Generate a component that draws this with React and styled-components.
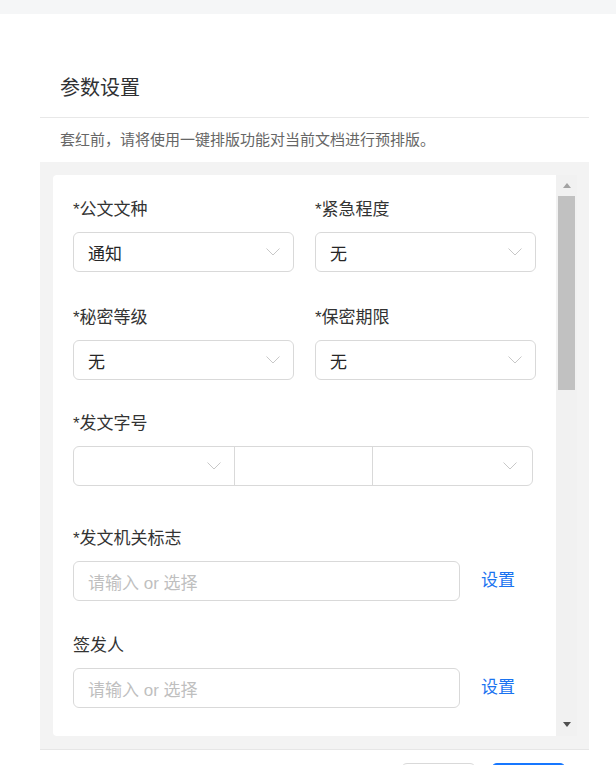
import React from 'react';
import styled, { createGlobalStyle } from 'styled-components';

const GlobalStyle = createGlobalStyle`
  html, body {
    margin: 0;
    padding: 0;
    background: #ffffff;
    font-family: "Liberation Sans", "Noto Sans CJK SC", sans-serif;
    color: #333333;
  }
  * {
    box-sizing: border-box;
  }
`;

const TopBar = styled.div`
  height: 14px;
  background-color: #f5f6f7;
`;

const Modal = styled.div`
  padding: 0 27px 0 40px;
`;

const Header = styled.div`
  padding: 60px 20px 15px;
  border-bottom: 1px solid #e8e8e8;
`;

const Title = styled.h2`
  margin: 0;
  font-size: 20px;
  line-height: 28px;
  font-weight: 400;
  color: #303133;
`;

const Notice = styled.p`
  margin: 11px 0 11px;
  padding-left: 20px;
  font-size: 15px;
  line-height: 22px;
  color: #666666;
`;

const Panel = styled.div`
  background-color: #f3f3f3;
  padding: 13px 12px 13px 13px;
  border-bottom: 1px solid #e6e6e6;
`;

const ScrollArea = styled.div`
  display: flex;
  height: 561px;
`;

const Card = styled.div`
  flex: 1;
  background-color: #ffffff;
  border-radius: 4px 0 0 4px;
  overflow: hidden;
  padding: 24px 20px 0 20px;
`;

const Grid = styled.div`
  display: grid;
  grid-template-columns: 1fr 1fr;
  column-gap: 21px;
`;

const Field = styled.div`
  margin-bottom: ${props => props.$space ?? 34}px;
`;

const Label = styled.div`
  font-size: 17px;
  line-height: 22px;
  color: #333333;
  margin-bottom: 11px;
`;

const SelectBox = styled.div`
  display: flex;
  align-items: center;
  justify-content: space-between;
  height: 40px;
  padding: 0 13px 0 14px;
  border: 1px solid #d9d9d9;
  border-radius: 6px;
  font-size: 17px;
  color: #262626;
  background: #ffffff;
`;

const Compound = styled.div`
  display: flex;
  width: 460px;
  height: 40px;
  border: 1px solid #d9d9d9;
  border-radius: 6px;
  overflow: hidden;
`;

const Segment = styled.div`
  display: flex;
  align-items: center;
  justify-content: flex-end;
  width: ${props => props.$width ? `${props.$width}px` : 'auto'};
  flex: ${props => props.$width ? 'none' : '1'};
  padding-right: ${props => props.$pad ?? 13}px;
  border-left: ${props => props.$first ? 'none' : '1px solid #d9d9d9'};
`;

const InputRow = styled.div`
  display: flex;
  align-items: center;
`;

const TextInput = styled.div`
  width: 387px;
  height: 40px;
  display: flex;
  align-items: center;
  padding-left: 14px;
  border: 1px solid #d9d9d9;
  border-radius: 6px;
  font-size: 17px;
  color: #bfbfbf;
`;

const LinkButton = styled.span`
  margin-left: 21px;
  font-size: 17px;
  line-height: 22px;
  color: #1a73f0;
  cursor: pointer;
`;

const Track = styled.div`
  width: 21px;
  background-color: #f1f1f1;
  display: flex;
  flex-direction: column;
  align-items: center;
`;

const ArrowButton = styled.div`
  height: 21px;
  width: 100%;
  display: flex;
  align-items: center;
  justify-content: center;
  margin-top: ${props => props.$down ? 'auto' : '0'};
`;

const Triangle = styled.div`
  width: 0;
  height: 0;
  border-left: 4.5px solid transparent;
  border-right: 4.5px solid transparent;
  ${props => props.$down
    ? 'border-top: 5px solid #505050; margin-top: -2px;'
    : 'border-bottom: 5px solid #a3a3a3; margin-top: 0;'}
`;

const Thumb = styled.div`
  width: 17px;
  height: 194px;
  background-color: #c1c1c1;
`;

const Footer = styled.div`
  display: flex;
  justify-content: flex-end;
  gap: 15px;
  padding: 13px 23px 0 0;
`;

const Button = styled.button`
  width: 75px;
  height: 32px;
  border-radius: 6px;
  font-family: inherit;
  font-size: 14px;
  border: 1px solid ${props => props.$primary ? '#1677ff' : '#d9d9d9'};
  background-color: ${props => props.$primary ? '#1677ff' : '#ffffff'};
  color: ${props => props.$primary ? '#ffffff' : '#333333'};
`;

const Chevron = () => (
  <svg width="14" height="8" viewBox="0 0 14 8" fill="none">
    <polyline points="0.5,0.5 7,7 13.5,0.5" stroke="#c8c8c8" strokeWidth="1" />
  </svg>
);

const Select = ({ value }) => (
  <SelectBox>
    <span>{value}</span>
    <Chevron />
  </SelectBox>
);

export default function App() {
  return (
    <>
      <GlobalStyle />
      <TopBar />
      <Modal>
        <Header>
          <Title>参数设置</Title>
        </Header>
        <Notice>套红前，请将使用一键排版功能对当前文档进行预排版。</Notice>
        <Panel>
          <ScrollArea>
            <Card>
              <Grid>
                <Field $space={35}>
                  <Label>*公文文种</Label>
                  <Select value="通知" />
                </Field>
                <Field $space={35}>
                  <Label>*紧急程度</Label>
                  <Select value="无" />
                </Field>
                <Field $space={33}>
                  <Label>*秘密等级</Label>
                  <Select value="无" />
                </Field>
                <Field $space={33}>
                  <Label>*保密期限</Label>
                  <Select value="无" />
                </Field>
              </Grid>
              <Field $space={42}>
                <Label>*发文字号</Label>
                <Compound>
                  <Segment $first $width={160}>
                    <Chevron />
                  </Segment>
                  <Segment $width={138} />
                  <Segment $pad={15}>
                    <Chevron />
                  </Segment>
                </Compound>
              </Field>
              <Field>
                <Label>*发文机关标志</Label>
                <InputRow>
                  <TextInput>请输入 or 选择</TextInput>
                  <LinkButton>设置</LinkButton>
                </InputRow>
              </Field>
              <Field>
                <Label>签发人</Label>
                <InputRow>
                  <TextInput>请输入 or 选择</TextInput>
                  <LinkButton>设置</LinkButton>
                </InputRow>
              </Field>
            </Card>
            <Track>
              <ArrowButton>
                <Triangle />
              </ArrowButton>
              <Thumb />
              <ArrowButton $down>
                <Triangle $down />
              </ArrowButton>
            </Track>
          </ScrollArea>
        </Panel>
        <Footer>
          <Button>取消</Button>
          <Button $primary>确定</Button>
        </Footer>
      </Modal>
    </>
  );
}
